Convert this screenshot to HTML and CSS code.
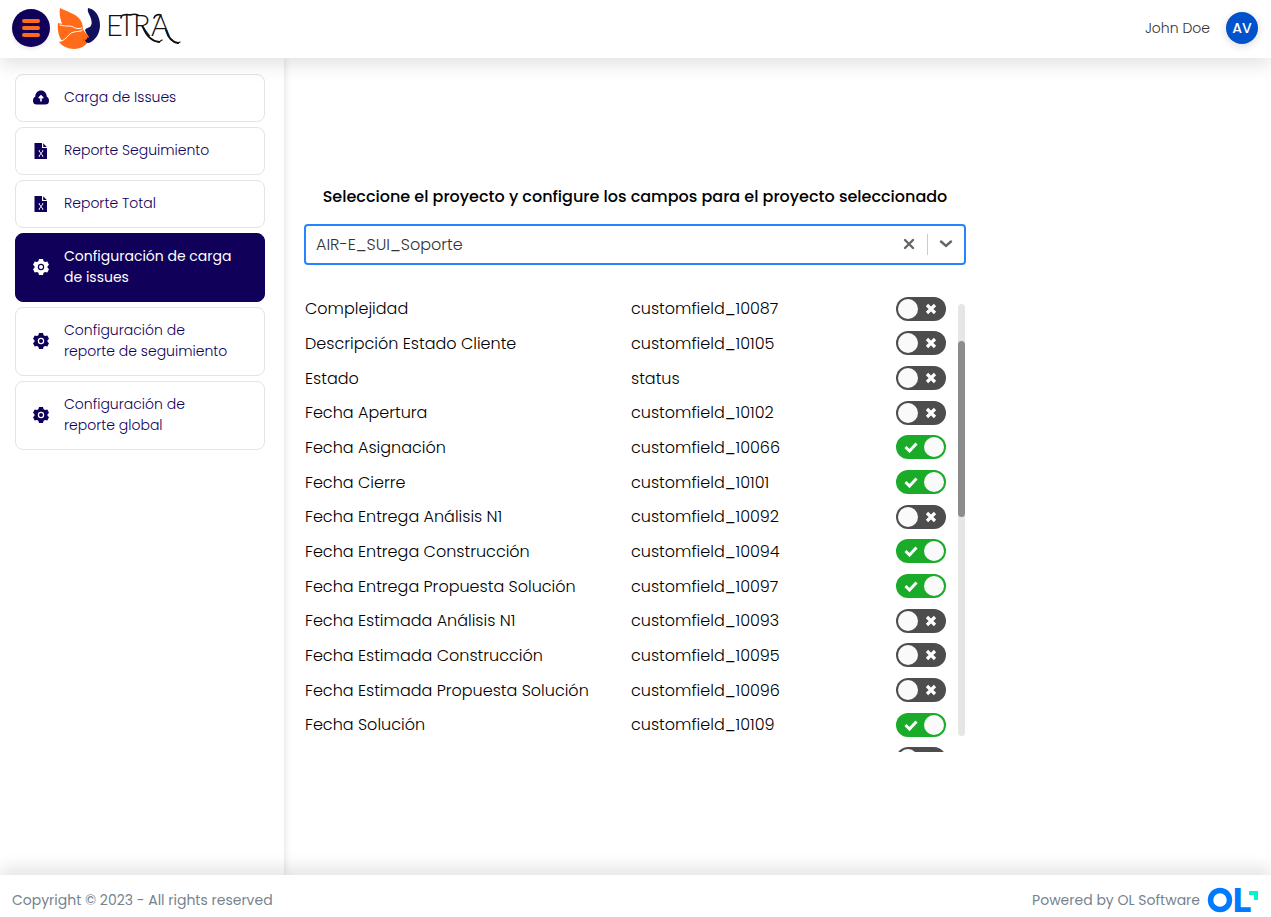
FILE: index.html
```html
<!DOCTYPE html>
<html lang="es">
<head>
<meta charset="utf-8">
<meta name="viewport" content="width=device-width, initial-scale=1">
<title>EIRA - Configuración de carga de issues</title>
<link rel="stylesheet" href="styles.css">
</head>
<body>
<svg class="sprite" aria-hidden="true">
  <symbol id="cross" viewBox="0 0 12 12"><path d="M2 2l8 8M10 2l-8 8" fill="none" stroke="currentColor" stroke-width="3.200"/></symbol>
  <symbol id="check" viewBox="0 0 14 12"><path d="M1.500 6l4 4L12.500 2.500" fill="none" stroke="currentColor" stroke-width="3"/></symbol>
  <symbol id="gear" viewBox="0 0 16 16"><path fill="currentColor" fill-rule="evenodd" d="M6 0h4l.6 2.200 1.500.9 2.200-.6 1.700 3.200L14.500 7.200v1.600L16 10.300l-1.700 3.200-2.200-.6-1.500.9L10 16H6l-.6-2.200-1.500-.9-2.200.6L0 10.300l1.500-1.500V7.200L0 5.700l1.700-3.200 2.200.6 1.500-.9zM8 4.800a3.200 3.200 0 1 0 0 6.400 3.200 3.200 0 0 0 0-6.400zm0 1.200a2 2 0 1 1 0 4 2 2 0 0 1 0-4z"/></symbol>
  <symbol id="sheet" viewBox="0 0 16 16"><path fill="currentColor" d="M1.500 0H9v5h5v11H1.500zM10.200.3L13.800 4h-3.600z"/><path d="M6.200 8l3.600 5M9.800 8l-3.600 5M5.700 7.800H7M9 7.800h1.300M5.700 13.200H7M9 13.200h1.300" fill="none" stroke="#fff" stroke-width=".9"/></symbol>
  <symbol id="cloud" viewBox="0 0 16 16"><path fill="currentColor" d="M3.800 14.500A3.900 3.900 0 0 1 0 10.500c0-1.900 1-3.300 2.200-3.800C2.300 3.200 4.700.5 8 .5s5.700 2.700 5.800 6.200C15 7.200 16 8.600 16 10.500a3.900 3.900 0 0 1-3.800 4z"/><path d="M8 11.500V6.700M5.800 8.100L8 5.800l2.200 2.300" fill="none" stroke="#fff" stroke-width="1.600"/></symbol>
</svg>

<header class="topbar">
  <button class="menu-button" type="button" aria-label="Menú"><span></span><span></span><span></span></button>
  <a class="brand" href="#" aria-label="EIRA">
    <svg viewBox="0 0 124 44" width="124" height="44">
      <path fill="#ff6b1a" d="M3 2c8 4 17 6 21 13 2 4 2 6 2 9l3 4c1 2 1 4 3 6-2 5-8 9-15 9-6 0-12-3-15-7l3-1C2 31 0 24 1 17l4 1C3 12 2 7 3 2z"/>
      <path fill="none" stroke="#fff" stroke-width="1" stroke-linecap="round" d="M3 19c3 1 6 1 9 1 5 0 6 4 13 2M4 35c6-1 7-8 13-9 4-1 6 0 9-2"/>
      <path fill="#10105c" d="M31 2c7 1 12 8 12 17 0 8-4 15-11 18-3 0-5-1-6-4l3 1c2-2 1-3 0-4l2 1c-1-3-2-4-3-7 1-2 3-2 5-3 2-2 2-5 1-8-1-5-4-6-3-11z"/>
      <path fill="none" stroke="#ff6b1a" stroke-width="1.500" d="M26 24c0 4 5 4 5 7l-3-1c-2 2-1 5 1 7"/>
      <text class="brand-text" y="30" x="49 66 76 94">EIRA</text>
      <g fill="none" stroke="#111" stroke-linecap="round">
        <path stroke-width="1.600" d="M64 12c0-3 3-4 10-3M73 9c3-1 6-1 8 0M97 12c1-3 4-4 7-3"/>
        <path stroke-width="2" d="M86 21c3 8 8 14 16 15M109 24c2 7 5 12 12 13"/>
        <path stroke-width="1.200" d="M102 36l3-2M121 37l2-1"/>
      </g>
    </svg>
  </a>
  <span class="user-name">John Doe</span>
  <span class="avatar">AV</span>
</header>

<div class="workspace">
  <nav class="sidebar">
    <a class="nav-item" href="#"><svg class="nav-icon"><use href="#cloud"/></svg><span>Carga de Issues</span></a>
    <a class="nav-item" href="#"><svg class="nav-icon"><use href="#sheet"/></svg><span>Reporte Seguimiento</span></a>
    <a class="nav-item" href="#"><svg class="nav-icon"><use href="#sheet"/></svg><span>Reporte Total</span></a>
    <a class="nav-item active" href="#" aria-current="page"><svg class="nav-icon"><use href="#gear"/></svg><span>Configuración de carga de issues</span></a>
    <a class="nav-item" href="#"><svg class="nav-icon"><use href="#gear"/></svg><span>Configuración de<br>reporte de seguimiento</span></a>
    <a class="nav-item" href="#"><svg class="nav-icon"><use href="#gear"/></svg><span>Configuración de<br>reporte global</span></a>
  </nav>

  <main class="main">
    <section class="panel">
      <label class="title" for="project">Seleccione el proyecto y configure los campos para el proyecto seleccionado</label>
      <div class="picker">
        <select id="project"><option>AIR-E_SUI_Soporte</option></select>
        <button class="clear" type="button" aria-label="Limpiar"><svg viewBox="0 0 12 12" width="12" height="12"><path d="M2 2l8 8M10 2l-8 8" fill="none" stroke="#666" stroke-width="2.400" stroke-linecap="round"/></svg></button>
        <span class="divider"></span>
        <svg class="chevron" viewBox="0 0 14 8" width="14" height="8" aria-hidden="true"><path d="M2 1.500l5 4.500 5-4.500" fill="none" stroke="#666" stroke-width="2.400" stroke-linecap="round"/></svg>
      </div>
      <div class="fields-view">
        <table class="fields">
          <tbody>
            <tr><td><label for="f1">Complejidad</label></td><td>customfield_10087</td><td><span class="toggle"><input id="f1" type="checkbox"><svg class="off"><use href="#cross"/></svg><svg class="on"><use href="#check"/></svg></span></td></tr>
            <tr><td><label for="f2">Descripción Estado Cliente</label></td><td>customfield_10105</td><td><span class="toggle"><input id="f2" type="checkbox"><svg class="off"><use href="#cross"/></svg><svg class="on"><use href="#check"/></svg></span></td></tr>
            <tr><td><label for="f3">Estado</label></td><td>status</td><td><span class="toggle"><input id="f3" type="checkbox"><svg class="off"><use href="#cross"/></svg><svg class="on"><use href="#check"/></svg></span></td></tr>
            <tr><td><label for="f4">Fecha Apertura</label></td><td>customfield_10102</td><td><span class="toggle"><input id="f4" type="checkbox"><svg class="off"><use href="#cross"/></svg><svg class="on"><use href="#check"/></svg></span></td></tr>
            <tr><td><label for="f5">Fecha Asignación</label></td><td>customfield_10066</td><td><span class="toggle"><input id="f5" type="checkbox" checked><svg class="off"><use href="#cross"/></svg><svg class="on"><use href="#check"/></svg></span></td></tr>
            <tr><td><label for="f6">Fecha Cierre</label></td><td>customfield_10101</td><td><span class="toggle"><input id="f6" type="checkbox" checked><svg class="off"><use href="#cross"/></svg><svg class="on"><use href="#check"/></svg></span></td></tr>
            <tr><td><label for="f7">Fecha Entrega Análisis N1</label></td><td>customfield_10092</td><td><span class="toggle"><input id="f7" type="checkbox"><svg class="off"><use href="#cross"/></svg><svg class="on"><use href="#check"/></svg></span></td></tr>
            <tr><td><label for="f8">Fecha Entrega Construcción</label></td><td>customfield_10094</td><td><span class="toggle"><input id="f8" type="checkbox" checked><svg class="off"><use href="#cross"/></svg><svg class="on"><use href="#check"/></svg></span></td></tr>
            <tr><td><label for="f9">Fecha Entrega Propuesta Solución</label></td><td>customfield_10097</td><td><span class="toggle"><input id="f9" type="checkbox" checked><svg class="off"><use href="#cross"/></svg><svg class="on"><use href="#check"/></svg></span></td></tr>
            <tr><td><label for="f10">Fecha Estimada Análisis N1</label></td><td>customfield_10093</td><td><span class="toggle"><input id="f10" type="checkbox"><svg class="off"><use href="#cross"/></svg><svg class="on"><use href="#check"/></svg></span></td></tr>
            <tr><td><label for="f11">Fecha Estimada Construcción</label></td><td>customfield_10095</td><td><span class="toggle"><input id="f11" type="checkbox"><svg class="off"><use href="#cross"/></svg><svg class="on"><use href="#check"/></svg></span></td></tr>
            <tr><td><label for="f12">Fecha Estimada Propuesta Solución</label></td><td>customfield_10096</td><td><span class="toggle"><input id="f12" type="checkbox"><svg class="off"><use href="#cross"/></svg><svg class="on"><use href="#check"/></svg></span></td></tr>
            <tr><td><label for="f13">Fecha Solución</label></td><td>customfield_10109</td><td><span class="toggle"><input id="f13" type="checkbox" checked><svg class="off"><use href="#cross"/></svg><svg class="on"><use href="#check"/></svg></span></td></tr>
            <tr><td></td><td></td><td><span class="toggle"><input type="checkbox" aria-label="Campo"></span></td></tr>
          </tbody>
        </table>
        <div class="track"><div class="thumb"></div></div>
      </div>
    </section>
  </main>
</div>

<footer class="footer">
  <span>Copyright © 2023 - All rights reserved</span>
  <span class="powered">Powered by OL Software
    <svg viewBox="0 0 52 26" width="52" height="26" role="img" aria-label="OL">
      <circle cx="13" cy="13" r="9.500" fill="none" stroke="#007bff" stroke-width="5.500"/>
      <text class="ol-text" x="26" y="25">L</text>
      <path fill="#00f5d0" d="M42 4h9v9h-4V8h-5z"/>
    </svg>
  </span>
</footer>
</body>
</html>
```

FILE: styles.css
```css
* { box-sizing: border-box; }

body {
  margin: 0;
  height: 100vh;
  display: flex;
  flex-direction: column;
  overflow: hidden;
  background: #fff;
  color: #000;
  font-family: Poppins, Inter, sans-serif;
  font-size: 16px;
  font-weight: 300;
}

.sprite { position: absolute; width: 0; height: 0; }

.topbar {
  position: relative;
  z-index: 2;
  flex: none;
  display: flex;
  align-items: center;
  padding: 6px 13px 8px 12px;
  background: #fff;
  box-shadow: 0 8px 16px rgba(0, 0, 0, 0.1);
}

.menu-button {
  width: 38px;
  height: 38px;
  display: flex;
  flex-direction: column;
  align-items: center;
  justify-content: center;
  gap: 3px;
  padding: 0;
  border: 0;
  border-radius: 50%;
  background: #10005a;
  box-shadow: 0 2px 4px rgba(0, 0, 0, 0.1);
}
.menu-button span { width: 18px; height: 4px; border-radius: 2px; background: #ff6b1a; }

.brand { display: flex; margin-left: 7px; }
.brand-text { font: 300 29px Lato, sans-serif; fill: #111; }

.user-name { margin-left: auto; margin-right: 16px; font-size: 14px; color: #333; }

.avatar {
  width: 32px;
  height: 32px;
  display: grid;
  place-items: center;
  border-radius: 50%;
  background: #0052cc;
  color: #fff;
  font-size: 14px;
  font-weight: 500;
  box-shadow: 0 2px 8px rgba(0, 0, 0, 0.15);
}

.workspace { flex: 1; min-height: 0; display: flex; }

.sidebar {
  flex: none;
  width: 284px;
  padding: 16px 19px 0 15px;
  display: flex;
  flex-direction: column;
  gap: 5px;
  box-shadow: 0 0 8px rgba(0, 0, 0, 0.15);
}

.nav-item {
  display: flex;
  align-items: center;
  gap: 15px;
  padding: 12px 17px 13px;
  border: 1px solid #e4e4e4;
  border-radius: 8px;
  color: #10005a;
  font-size: 14px;
  line-height: 21px;
  text-decoration: none;
}
.nav-item.active { background: #10005a; border-color: #10005a; color: #fff; font-weight: 400; }
.nav-icon { flex: none; width: 16px; height: 16px; }

.main { flex: 1; min-width: 0; display: flex; align-items: center; padding: 0 20px; }
.panel { flex: 0 1 662px; min-width: 0; padding-top: 3px; }

.title {
  display: block;
  margin-bottom: 15px;
  font-size: 16px;
  font-weight: 500;
  line-height: 24px;
  text-align: center;
}

.picker {
  display: flex;
  align-items: center;
  height: 41px;
  padding-right: 11px;
  border: 2px solid #2684ff;
  border-radius: 4px;
}
.picker select {
  flex: 1;
  min-width: 0;
  height: 100%;
  padding: 0 10px;
  border: 0;
  outline: 0;
  appearance: none;
  background: transparent;
  color: #333;
  font: inherit;
}
.clear { display: flex; padding: 0 12px; border: 0; background: none; }
.divider { width: 1px; height: 21px; margin-right: 11px; background: #ccc; }

.fields-view { position: relative; height: 460px; margin-top: 27px; overflow: hidden; }

.fields { width: 100%; height: 484px; border-collapse: collapse; table-layout: fixed; }
.fields td { padding: 0; vertical-align: middle; white-space: nowrap; }
.fields td:first-child { width: 327px; padding-left: 1px; }
.fields td:last-child { width: 70px; }

.toggle { position: relative; display: block; width: 50px; height: 24px; }
.toggle input {
  width: 50px;
  height: 24px;
  display: flex;
  align-items: center;
  margin: 0;
  padding: 2px;
  appearance: none;
  border-radius: 12px;
  background: #4d4d4d;
}
.toggle input::before { content: ""; width: 20px; height: 20px; border-radius: 50%; background: #fafafa; }
.toggle input:checked { justify-content: flex-end; background: #1aab29; }
.toggle svg { position: absolute; top: 6px; color: #fff; pointer-events: none; }
.off { left: 29px; width: 12px; height: 12px; }
.on { left: 8px; width: 14px; height: 12px; }
.toggle input:checked ~ .off,
.toggle input:not(:checked) ~ .on { display: none; }

.track { position: absolute; top: 12px; right: 1px; bottom: 16px; width: 7px; border-radius: 4px; background: #e6e6e6; }
.thumb { height: 176px; margin-top: 37px; border-radius: 4px; background: #8c8c8e; }

.footer {
  position: relative;
  z-index: 2;
  flex: none;
  display: flex;
  align-items: center;
  justify-content: space-between;
  padding: 12px 12px 4px;
  background: #fff;
  color: #76838f;
  font-size: 14px;
  font-weight: 400;
  box-shadow: 0 -8px 16px rgba(0, 0, 0, 0.1);
}
.powered { display: flex; align-items: center; gap: 7px; }
.ol-text { font: 800 33px Inter, sans-serif; fill: #007bff; }
```
